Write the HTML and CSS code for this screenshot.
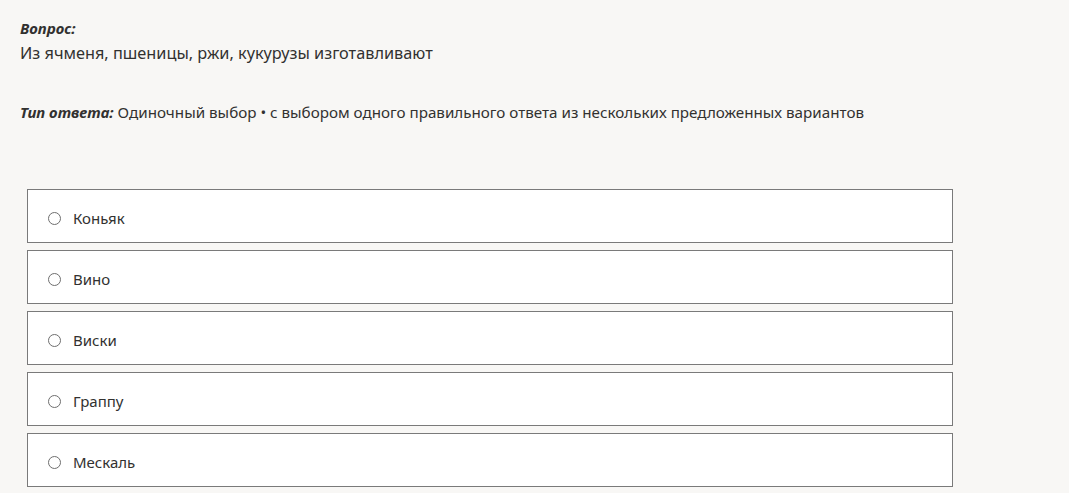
FILE: index.html
```html
<!DOCTYPE html>
<html lang="ru">
<head>
<meta charset="utf-8">
<link rel="stylesheet" href="styles.css">
</head>
<body>
<div class="page">
  <div class="question">
    <div class="label">Вопрос:</div>
    <div class="text">Из ячменя, пшеницы, ржи, кукурузы изготавливают</div>
  </div>
  <div class="type"><span class="label">Тип ответа:</span> Одиночный выбор • с выбором одного правильного ответа из нескольких предложенных вариантов</div>
  <div class="options">
    <div class="option"><span class="radio"></span><span>Коньяк</span></div>
    <div class="option"><span class="radio"></span><span>Вино</span></div>
    <div class="option"><span class="radio"></span><span>Виски</span></div>
    <div class="option"><span class="radio"></span><span>Граппу</span></div>
    <div class="option"><span class="radio"></span><span>Мескаль</span></div>
  </div>
</div>
</body>
</html>
```
FILE: styles.css
```css
html, body {
  margin: 0;
  padding: 0;
  background: #f8f7f5;
}
body {
  font-family: "Noto Sans", "Open Sans", sans-serif;
  font-size: 15px;
  color: #323130;
}
.page {
  padding: 16px 0 0 20px;
}
.question {
  line-height: 25px;
}
.question .text {
  font-size: 16.3px;
  line-height: 24px;
}
.label {
  font-weight: 700;
  font-style: italic;
}
.type {
  margin-top: 35px;
  line-height: 24px;
  font-size: 15.2px;
}
.type .label {
  font-size: 15px;
}
.options {
  margin-top: 65px;
  margin-left: 7px;
  width: 926px;
  display: flex;
  flex-direction: column;
  gap: 7px;
}
.option {
  box-sizing: border-box;
  height: 54px;
  border: 1px solid #7a7a7a;
  background: #ffffff;
  display: flex;
  align-items: center;
  padding: 3px 0 0 20px;
  gap: 12px;
}
.radio {
  box-sizing: border-box;
  width: 13px;
  height: 13px;
  margin-top: 2px;
  border: 1px solid #6e6e6e;
  border-radius: 50%;
  flex: none;
}
```
